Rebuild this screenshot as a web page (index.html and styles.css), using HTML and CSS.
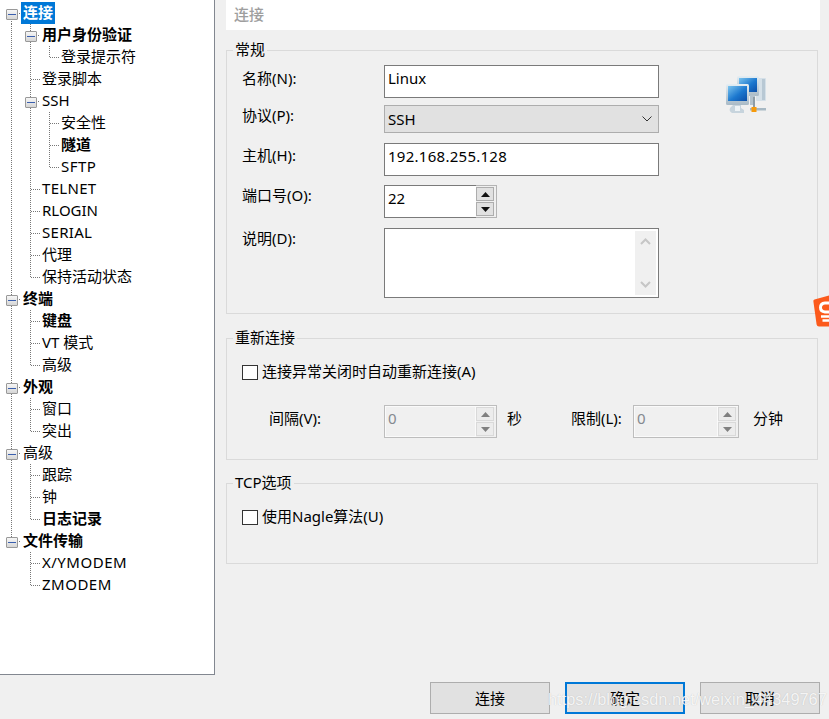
FILE: index.html
```html
<!DOCTYPE html>
<html lang="zh-CN">
<head>
<meta charset="utf-8">
<title>连接</title>
<link rel="stylesheet" href="styles.css">
</head>
<body>
<div class="app">
  <nav class="tree">
    <div class="row"><span class="c b first"><i></i></span><span class="tx bold sel">连接</span></div>
    <div class="row"><span class="c v"></span><span class="c b first-child"><i></i></span><span class="tx bold">用户身份验证</span></div>
    <div class="row"><span class="c v"></span><span class="c v"></span><span class="c l"></span><span class="tx">登录提示符</span></div>
    <div class="row"><span class="c v"></span><span class="c t"></span><span class="tx">登录脚本</span></div>
    <div class="row"><span class="c v"></span><span class="c b"><i></i></span><span class="tx">SSH</span></div>
    <div class="row"><span class="c v"></span><span class="c v"></span><span class="c t"></span><span class="tx">安全性</span></div>
    <div class="row"><span class="c v"></span><span class="c v"></span><span class="c t"></span><span class="tx bold">隧道</span></div>
    <div class="row"><span class="c v"></span><span class="c v"></span><span class="c l"></span><span class="tx caps">SFTP</span></div>
    <div class="row"><span class="c v"></span><span class="c t"></span><span class="tx caps-s">TELNET</span></div>
    <div class="row"><span class="c v"></span><span class="c t"></span><span class="tx">RLOGIN</span></div>
    <div class="row"><span class="c v"></span><span class="c t"></span><span class="tx caps-s">SERIAL</span></div>
    <div class="row"><span class="c v"></span><span class="c t"></span><span class="tx">代理</span></div>
    <div class="row"><span class="c v"></span><span class="c l"></span><span class="tx">保持活动状态</span></div>
    <div class="row"><span class="c b"><i></i></span><span class="tx bold">终端</span></div>
    <div class="row"><span class="c v"></span><span class="c t"></span><span class="tx bold">键盘</span></div>
    <div class="row"><span class="c v"></span><span class="c t"></span><span class="tx">VT 模式</span></div>
    <div class="row"><span class="c v"></span><span class="c l"></span><span class="tx">高级</span></div>
    <div class="row"><span class="c b"><i></i></span><span class="tx bold">外观</span></div>
    <div class="row"><span class="c v"></span><span class="c t"></span><span class="tx">窗口</span></div>
    <div class="row"><span class="c v"></span><span class="c l"></span><span class="tx">突出</span></div>
    <div class="row"><span class="c b"><i></i></span><span class="tx">高级</span></div>
    <div class="row"><span class="c v"></span><span class="c t"></span><span class="tx">跟踪</span></div>
    <div class="row"><span class="c v"></span><span class="c t"></span><span class="tx">钟</span></div>
    <div class="row"><span class="c v"></span><span class="c l"></span><span class="tx bold">日志记录</span></div>
    <div class="row"><span class="c b last"><i></i></span><span class="tx bold">文件传输</span></div>
    <div class="row"><span class="c"></span><span class="c t"></span><span class="tx caps">X/YMODEM</span></div>
    <div class="row"><span class="c"></span><span class="c l"></span><span class="tx caps">ZMODEM</span></div>
  </nav>

  <main class="panel">
    <header class="title">连接</header>

    <fieldset class="group general">
      <legend>常规</legend>
      <div class="general-body">
        <div class="form">
          <div class="frow"><label class="lbl lbl-name">名称(N):</label><div class="field f33">Linux</div></div>
          <div class="frow m7"><label class="lbl lbl-proto">协议(P):</label>
            <div class="select"><span>SSH</span>
              <svg width="10" height="6" viewBox="0 0 10 6"><path d="M0.5 0.5 L5 5 L9.5 0.5" fill="none" stroke="#333" stroke-width="1"/></svg>
            </div>
          </div>
          <div class="frow m10"><label class="lbl lbl-host">主机(H):</label><div class="field f33 digits">192.168.255.128</div></div>
          <div class="frow m9"><label class="lbl lbl-port">端口号(O):</label>
            <div class="spin spin-port">
              <div class="spin-text">22</div>
              <div class="spin-btns">
                <div class="sbtn"><svg width="9" height="5" viewBox="0 0 9 5"><path d="M4.5 0 L9 5 L0 5 Z" fill="#111"/></svg></div>
                <div class="sbtn"><svg width="9" height="5" viewBox="0 0 9 5"><path d="M0 0 L9 0 L4.5 5 Z" fill="#111"/></svg></div>
              </div>
            </div>
          </div>
          <div class="frow m10"><label class="lbl lbl-desc">说明(D):</label>
            <div class="memo">
              <div class="memo-bar">
                <svg width="11" height="7" viewBox="0 0 11 7"><path d="M1 6 L5.5 1.5 L10 6" fill="none" stroke="#c6c6c6" stroke-width="2"/></svg>
                <svg width="11" height="7" viewBox="0 0 11 7"><path d="M1 1 L5.5 5.5 L10 1" fill="none" stroke="#c6c6c6" stroke-width="2"/></svg>
              </div>
            </div>
          </div>
        </div>
        <svg class="net-icon" width="40" height="40" viewBox="0 0 40 40">
          <defs>
            <linearGradient id="scr" x1="0" y1="0" x2="1" y2="1">
              <stop offset="0" stop-color="#7cc4ee"/><stop offset="0.55" stop-color="#1c78cf"/><stop offset="1" stop-color="#0c4fa8"/>
            </linearGradient>
            <linearGradient id="frm" x1="0" y1="0" x2="0" y2="1">
              <stop offset="0" stop-color="#e4edf3"/><stop offset="1" stop-color="#a9bac6"/>
            </linearGradient>
          </defs>
          <rect x="30" y="3" width="10" height="23" rx="1" fill="#d5e0e8"/>
          <rect x="36" y="4" width="3" height="21" fill="#b8c8d4"/>
          <rect x="11" y="1" width="22" height="20" rx="1.5" fill="url(#frm)"/>
          <rect x="13" y="3" width="18" height="14" fill="url(#scr)"/>
          <rect x="24" y="20" width="5" height="10" fill="#b3c2cd"/>
          <rect x="24" y="33" width="16" height="2.5" fill="#a8b9c4"/>
          <rect x="0" y="9" width="23" height="21" rx="1.5" fill="url(#frm)"/>
          <rect x="2" y="11" width="19" height="15" fill="url(#scr)"/>
          <path d="M7 30 h8 v3 l3 2 v3 h-12 c-2-1-3-3-2-5 Z" fill="#c7d4dd"/>
          <rect x="9" y="31" width="5" height="5" fill="#eef3f6"/>
          <rect x="27" y="22" width="2" height="11" fill="#8d9ca6"/>
          <rect x="25.5" y="32" width="5" height="5" fill="#f59a0c"/>
        </svg>
      </div>
    </fieldset>

    <fieldset class="group reconnect">
      <legend>重新连接</legend>
      <div class="check"><span class="box"></span><span class="check-text">连接异常关闭时自动重新连接(A)</span></div>
      <div class="interval">
        <span class="il il-a">间隔(V):</span>
        <div class="spin spin-a dis">
          <div class="spin-text">0</div>
          <div class="spin-btns">
            <div class="sbtn"><svg width="9" height="5" viewBox="0 0 9 5"><path d="M4.5 0 L9 5 L0 5 Z" fill="#808080"/></svg></div>
            <div class="sbtn"><svg width="9" height="5" viewBox="0 0 9 5"><path d="M0 0 L9 0 L4.5 5 Z" fill="#808080"/></svg></div>
          </div>
        </div>
        <span class="il il-sec">秒</span>
        <span class="il il-limit">限制(L):</span>
        <div class="spin spin-b dis">
          <div class="spin-text">0</div>
          <div class="spin-btns">
            <div class="sbtn"><svg width="9" height="5" viewBox="0 0 9 5"><path d="M4.5 0 L9 5 L0 5 Z" fill="#808080"/></svg></div>
            <div class="sbtn"><svg width="9" height="5" viewBox="0 0 9 5"><path d="M0 0 L9 0 L4.5 5 Z" fill="#808080"/></svg></div>
          </div>
        </div>
        <span class="il il-min">分钟</span>
      </div>
    </fieldset>

    <fieldset class="group tcp">
      <legend>TCP选项</legend>
      <div class="check"><span class="box"></span><span class="check-text">使用Nagle算法(U)</span></div>
    </fieldset>

    <footer class="actions">
      <button class="btn">连接</button>
      <button class="btn focus">确定</button>
      <button class="btn">取消</button>
    </footer>
  </main>
</div>

<svg class="badge" width="16" height="32" viewBox="0 0 16 32">
  <path d="M1.5 4.5 Q0 5 0.4 6.5 L3.6 29.5 Q4 31.5 6 31.5 L16 31.5 L16 0.5 Z" fill="#fc5a1c"/>
  <path d="M16 8 L12 8 Q7.5 8.5 7.5 12.5 Q7.5 16.5 12 17 L16 17" fill="none" stroke="#fff" stroke-width="3"/>
  <circle cx="15.5" cy="12.5" r="1.6" fill="#fc5a1c"/>
  <path d="M8 21.5 L16 21.5 M9.5 25.5 L16 25.5" stroke="#fff" stroke-width="2.4"/>
</svg>
<div class="watermark">https://blog.csdn.net/weixin_44349767</div>
</body>
</html>
```
FILE: styles.css
```css
* { box-sizing: border-box; }
html, body { margin: 0; padding: 0; }
body {
  width: 829px;
  height: 719px;
  overflow: hidden;
  background: #f0f0f0;
  color: #000;
  font: 15px/20px "Noto Sans", "Noto Sans CJK SC", sans-serif;
}
.app { display: flex; align-items: flex-start; }

/* tree */
.tree {
  width: 215px;
  height: 675px;
  flex: none;
  padding: 2px 0 0 2px;
  background: #fff;
  border-right: 1px solid #828790;
  border-bottom: 1px solid #828790;
}
.row { display: flex; height: 22px; white-space: nowrap; }
.c { width: 19px; height: 22px; flex: none; display: block; --d: repeating-linear-gradient(to bottom, #777 0 1px, transparent 1px 2px); --h: repeating-linear-gradient(to right, #777 0 1px, transparent 1px 2px); background-repeat: no-repeat; }
.v { background-image: var(--d); background-size: 1px 22px; background-position: 9px 0; }
.t { background-image: var(--d), var(--h); background-size: 1px 22px, 9px 1px; background-position: 9px 0, 10px 11px; }
.l { background-image: var(--d), var(--h); background-size: 1px 12px, 9px 1px; background-position: 9px 0, 10px 11px; }
.b { background-image: var(--d), var(--h); background-size: 1px 22px, 4px 1px; background-position: 9px 0, 15px 11px; padding: 7px 0 0 4px; }
.b.first { background-size: 1px 15px, 4px 1px; background-position: 9px 7px, 15px 11px; }
.b.last { background-size: 1px 8px, 4px 1px; background-position: 9px 0, 15px 11px; }
.b i {
  display: flex;
  align-items: center;
  justify-content: center;
  width: 12px;
  height: 11px;
  border: 1px solid #999;
  border-radius: 1px;
  background: linear-gradient(#f6f6f6, #d6d6d6);
}
.b i::after { content: ""; width: 8px; height: 1px; background: #3a5fae; }
.tx { padding: 0 2px; height: 22px; line-height: 20px; }
.caps { letter-spacing: 0.5px; }
.caps-s { letter-spacing: 0.3px; }
.bold { font-weight: 700; }
.sel { background: #0078d7; color: #fff; }

/* right panel */
.panel { width: 594px; margin-left: 11px; flex: none; }
.title { height: 30px; padding-left: 8px; background: #fff; color: #9e9e9e; line-height: 28px; font-weight: 500; }
.group {
  width: 592px;
  min-width: 0;
  margin: 0;
  padding: 0 15px;
  border: 1px solid #dadada;
}
.group legend { margin-left: -9px; padding: 0 2px; line-height: 18px; height: 20px; }
.general { margin-top: 10px; padding-bottom: 15px; }
.general-body { display: flex; padding-top: 5px; }
.reconnect { margin-top: 14px; padding-top: 14px; padding-bottom: 21px; }
.tcp { margin-top: 13px; padding-top: 14px; padding-bottom: 36px; }

.form { width: 417px; flex: none; }
.frow { display: flex; align-items: flex-start; }
.m7 { margin-top: 7px; }
.m9 { margin-top: 9px; }
.m10 { margin-top: 10px; }
.lbl { width: 142px; flex: none; }
.lbl-name { padding-top: 3px; }
.lbl-proto { padding-top: 0; }
.lbl-host { padding-top: 2px; }
.lbl-port { padding-top: 0; }
.lbl-desc { padding-top: 0; }
.field { width: 275px; height: 33px; padding: 0 3px; border: 1px solid #7a7a7a; background: #fff; line-height: 25px; }
.digits { letter-spacing: 0.27px; }
.select { width: 275px; height: 28px; padding: 0 6px 0 3px; display: flex; align-items: center; justify-content: space-between; background: #e1e1e1; border: 1px solid #adadad; }
.spin { display: flex; height: 33px; }
.spin-port { width: 113px; }
.spin-text { flex: 1; padding: 0 3px; border: 1px solid #7a7a7a; border-right: 0; background: #fff; line-height: 25px; }
.spin-btns { width: 21px; flex: none; display: flex; flex-direction: column; gap: 1px; padding: 1px 2px 1px 0; border: 1px solid #b4b4b4; border-left: 0; }
.sbtn { flex: 1; display: flex; align-items: center; justify-content: center; background: #e1e1e1; border: 1px solid #adadad; }
.dis .spin-text { background: #f0f0f0; border-color: #bdbdbd; color: #85898f; box-shadow: inset 0 0 0 1px #fafafa; }
.dis .spin-btns { border-color: #bdbdbd; box-shadow: inset 0 1px 0 #fafafa; }
.dis .sbtn { background: #ececec; border-color: #d9d9d9; }
.memo { width: 275px; height: 70px; padding: 1px; border: 1px solid #7a7a7a; background: #fff; display: flex; justify-content: flex-end; }
.memo-bar { width: 21px; display: flex; flex-direction: column; justify-content: space-between; align-items: center; padding: 7px 0; margin: 1px 1px 1px 0; background: #f0f0f0; }
.net-icon { margin: 10px 0 0 67px; flex: none; filter: blur(0.3px); }

.check { display: flex; align-items: center; gap: 4px; height: 20px; }
.check-text { padding-bottom: 2px; }
.box { width: 16px; height: 15px; flex: none; background: #fff; border: 1px solid #333; }
.interval { display: flex; align-items: center; margin-top: 23px; height: 33px; }
.il { display: block; flex: none; padding-bottom: 8px; }
.il-a { width: 115px; margin-left: 27px; }
.spin-a { width: 113px; }
.il-sec { width: 64px; margin-left: 10px; }
.il-limit { width: 62px; }
.spin-b { width: 106px; }
.il-min { margin-left: 14px; }

.actions { display: flex; justify-content: flex-end; gap: 15px; margin-top: 118px; }
.btn { width: 120px; height: 32px; padding: 0; font: inherit; line-height: 30px; color: #000; background: #e1e1e1; border: 1px solid #adadad; border-radius: 0; }
.focus { border: 2px solid #0078d7; line-height: 28px; }

.badge { position: absolute; left: 813px; top: 295px; }
.watermark {
  position: absolute;
  left: 548px;
  top: 688px;
  font: 16.4px/22px "Liberation Sans", sans-serif;
  color: rgba(255, 255, 255, 0.85);
  text-shadow: 0 0 1px rgba(120, 120, 120, 0.4);
  white-space: nowrap;
}
```
